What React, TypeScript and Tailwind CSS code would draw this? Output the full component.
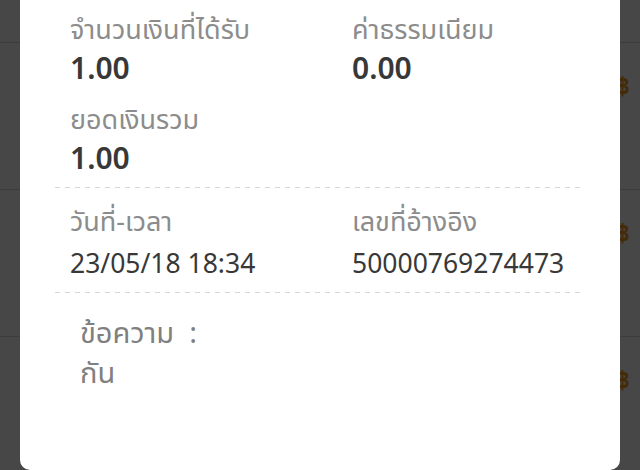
import React from 'react';

interface Field {
  label: string;
  value: string;
}

const topFields: Field[] = [
  { label: 'จำนวนเงินที่ได้รับ', value: '1.00' },
  { label: 'ค่าธรรมเนียม', value: '0.00' },
  { label: 'ยอดเงินรวม', value: '1.00' },
];

const bottomFields: Field[] = [
  { label: 'วันที่-เวลา', value: '23/05/18 18:34' },
  { label: 'เลขที่อ้างอิง', value: '50000769274473' },
];

const Dashed = () => (
  <div className="mx-[35px] h-px bg-[linear-gradient(to_right,#d6d6d6_55%,transparent_55%)] bg-[length:10px_1px]" />
);

const App: React.FC = () => {
  return (
    <div className="relative h-[470px] w-[640px] overflow-hidden bg-white font-['Noto_Sans','Noto_Sans_Thai',sans-serif]">
      {/* list behind the dialog */}
      <div className="flex flex-col">
        <div className="h-[43px] border-b border-[#d6d6d6]" />
        {[0, 1, 2].map(i => (
          <div key={i} className="flex h-[147px] items-start justify-end border-b border-[#d6d6d6] pr-[10px] pt-[28px]">
            <span className="text-[24px] font-bold leading-[30px] text-[#f29a16]">฿</span>
          </div>
        ))}
      </div>

      <div className="absolute inset-0 bg-black/[0.72]" />

      {/* dialog */}
      <div className="absolute left-5 right-5 top-0 bottom-0 rounded-b-[10px] bg-white">
        <div className="grid grid-cols-[282px_1fr] px-[50px] pt-[12px]">
          {topFields.map((f, i) => (
            <div key={f.label} className={i >= 2 ? 'mt-[14px]' : ''}>
              <p className="text-[27px] leading-[34px] text-[#8c8c8c]">{f.label}</p>
              <p className="mt-[2px] text-[30px] font-semibold leading-[40px] text-[#383838]">{f.value}</p>
            </div>
          ))}
        </div>

        <div className="mt-[9px]">
          <Dashed />
        </div>

        <div className="grid grid-cols-[282px_1fr] px-[50px] pt-[16px]">
          {bottomFields.map(f => (
            <div key={f.label}>
              <p className="text-[27px] leading-[34px] text-[#8c8c8c]">{f.label}</p>
              <p className="mt-[8px] text-[26.5px] leading-[34px] text-[#383838]">{f.value}</p>
            </div>
          ))}
        </div>

        <div className="mt-[12px]">
          <Dashed />
        </div>

        <div className="px-[60px] pt-[20px] text-[29px] leading-[38px] text-[#808080]">
          <p>ข้อความ&nbsp;&nbsp;:</p>
          <p className="mt-[2px]">กัน</p>
        </div>
      </div>
    </div>
  );
};

export default App;
